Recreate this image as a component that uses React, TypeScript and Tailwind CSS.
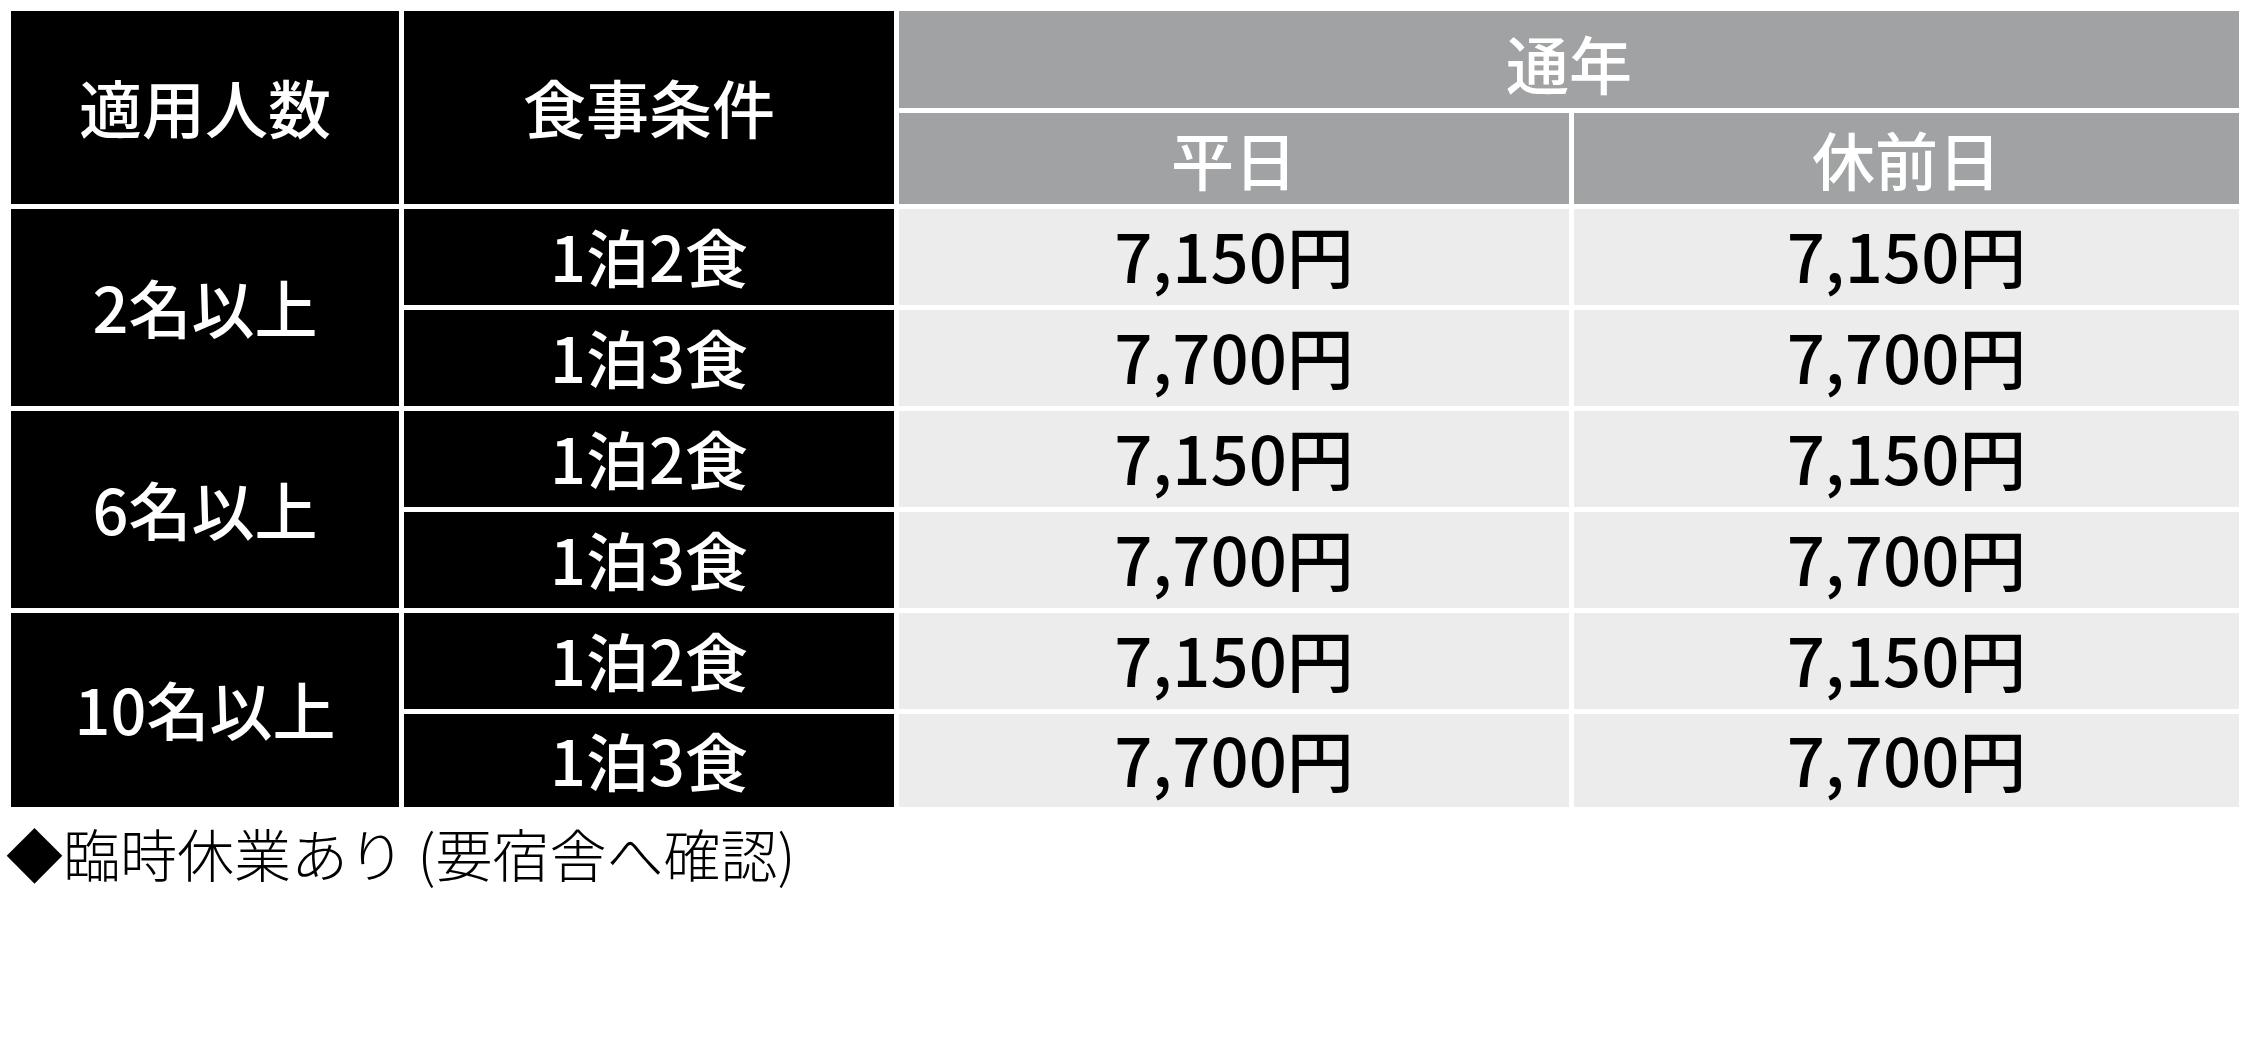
const font = { fontFamily: '"Noto Sans CJK JP", "Noto Sans", sans-serif' };

type Row = { meal: string; weekday: string; holiday: string };
type Group = { label: string; rows: Row[] };

const groups: Group[] = [
  {
    label: '2名以上',
    rows: [
      { meal: '1泊2食', weekday: '7,150円', holiday: '7,150円' },
      { meal: '1泊3食', weekday: '7,700円', holiday: '7,700円' },
    ],
  },
  {
    label: '6名以上',
    rows: [
      { meal: '1泊2食', weekday: '7,150円', holiday: '7,150円' },
      { meal: '1泊3食', weekday: '7,700円', holiday: '7,700円' },
    ],
  },
  {
    label: '10名以上',
    rows: [
      { meal: '1泊2食', weekday: '7,150円', holiday: '7,150円' },
      { meal: '1泊3食', weekday: '7,700円', holiday: '7,700円' },
    ],
  },
];

const dark = 'bg-black text-white flex items-center justify-center pb-[5px] text-[63px] font-medium leading-none';
const head = 'bg-[#a1a2a4] text-white flex items-center justify-center pb-[3px] text-[63px] font-medium leading-none';
const price = 'bg-[#ececec] text-black flex items-center justify-center pb-[7px] text-[67px] font-medium leading-none';

export default function App() {
  return (
    <div className="min-h-screen bg-white pt-[11px]" style={font}>
      <div className="ml-[11px] grid w-[2228px] grid-cols-[388px_490px_670px_665px] grid-rows-[97px_91px_96px_96px_96px_96px_96px_93px] gap-[5px]">
        <div className={`${dark} row-span-2`}>適用人数</div>
        <div className={`${dark} row-span-2`}>食事条件</div>
        <div className={`${head} col-span-2 pt-[6px]`}>通年</div>
        <div className={head}>平日</div>
        <div className={head}>休前日</div>

        {groups.map((g) => (
          <>
            <div key={g.label} className={`${dark} row-span-2`}>
              {g.label}
            </div>
            {g.rows.map((r, i) => (
              <>
                <div key={`${g.label}-m${i}`} className={dark}>
                  {r.meal}
                </div>
                <div key={`${g.label}-w${i}`} className={price}>
                  {r.weekday}
                </div>
                <div key={`${g.label}-h${i}`} className={price}>
                  {r.holiday}
                </div>
              </>
            ))}
          </>
        ))}
      </div>
      <p className="mt-[11px] pl-[6px] text-[57px] font-light leading-[1.2] text-black">
        ◆臨時休業あり (要宿舎へ確認)
      </p>
    </div>
  );
}
